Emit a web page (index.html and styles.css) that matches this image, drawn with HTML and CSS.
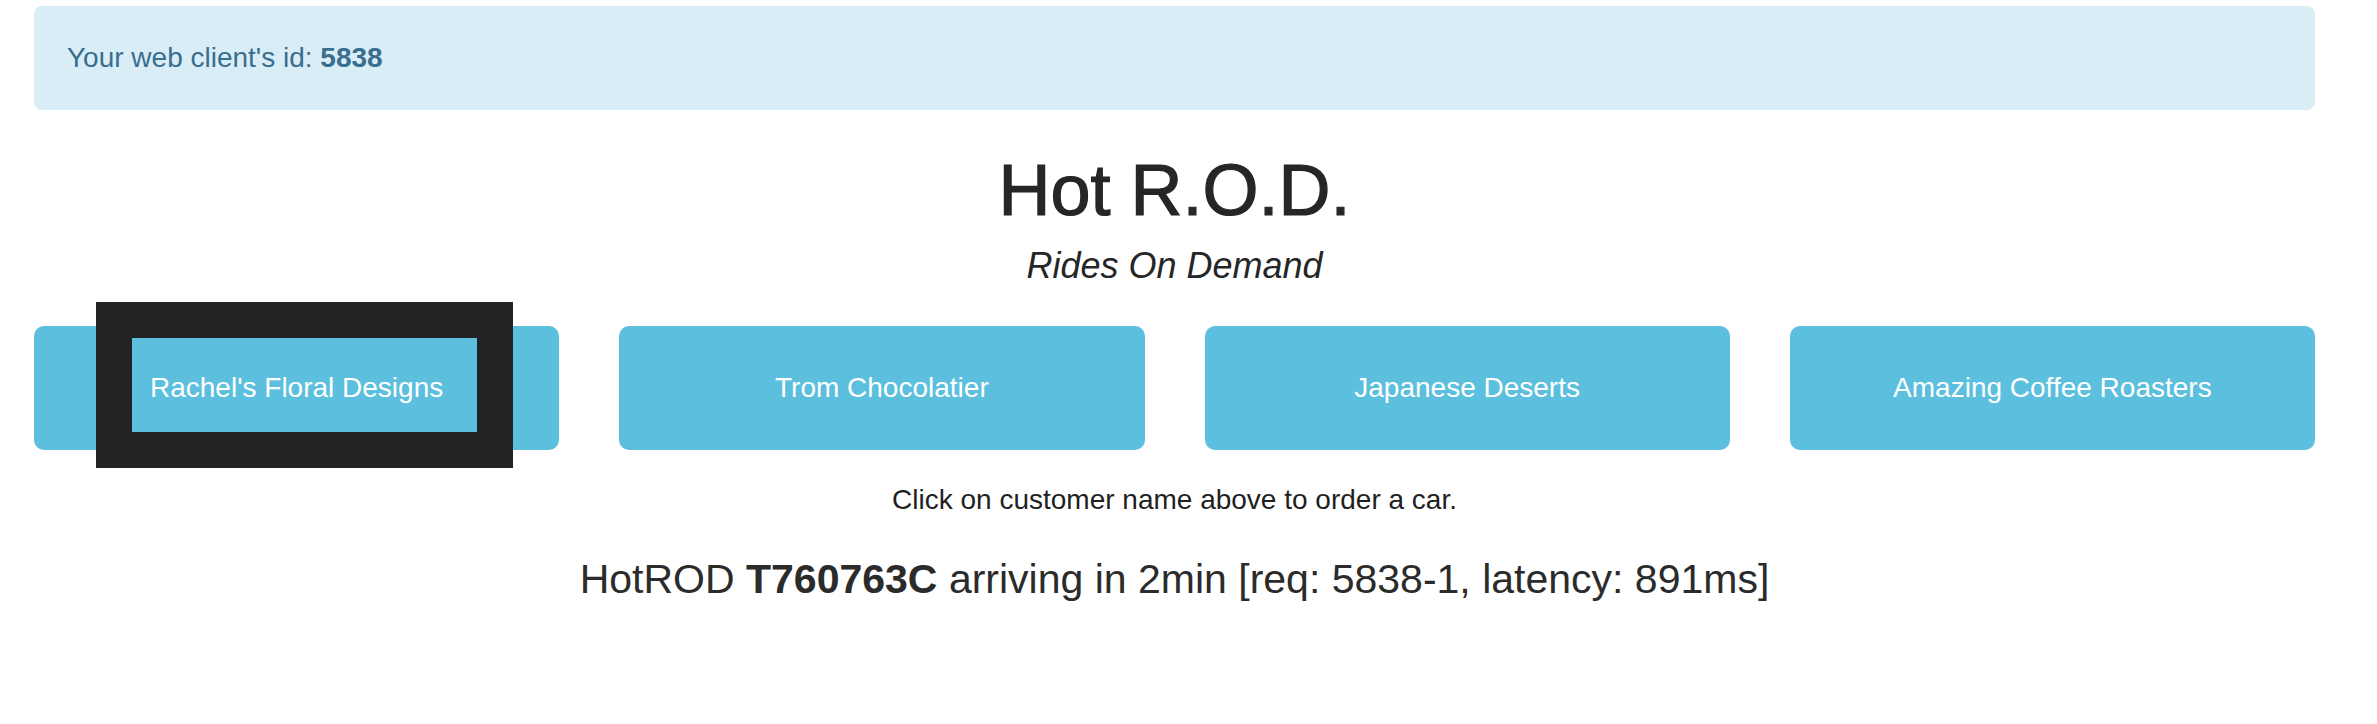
FILE: index.html
```html
<!DOCTYPE html>
<html lang="en">
<head>
<meta charset="utf-8">
<title>Hot R.O.D. - Rides On Demand</title>
<link rel="stylesheet" href="styles.css">
</head>
<body>
<div class="page">
  <div class="alert">Your web client's id: <strong>5838</strong></div>
  <h1 class="title">Hot R.O.D.</h1>
  <p class="subtitle">Rides On Demand</p>
  <div class="customers">
    <div class="cell">
      <button class="btn" type="button">Rachel's Floral Designs</button>
      <span class="focus-box"></span>
    </div>
    <div class="cell"><button class="btn" type="button">Trom Chocolatier</button></div>
    <div class="cell"><button class="btn" type="button">Japanese Deserts</button></div>
    <div class="cell"><button class="btn" type="button">Amazing Coffee Roasters</button></div>
  </div>
  <p class="hint">Click on customer name above to order a car.</p>
  <p class="result">HotROD <strong>T760763C</strong> arriving in 2min [req: 5838-1, latency: 891ms]</p>
</div>
</body>
</html>
```
FILE: styles.css
```css
html, body {
  margin: 0;
  padding: 0;
  background: #ffffff;
}

body {
  font-family: "Liberation Sans", Arial, Helvetica, sans-serif;
  color: #262626;
}

.page {
  width: 2281px;
  margin-left: 34px;
  padding-top: 6px;
  display: flex;
  flex-direction: column;
}

.alert {
  box-sizing: border-box;
  height: 104px;
  padding: 30px 31px;
  border: 2px solid #d9edf7;
  border-radius: 8px;
  background: #d9edf7;
  color: #3a6e8e;
  font-size: 28px;
  line-height: 40px;
}

.alert strong {
  font-weight: 700;
}

.title {
  margin: 40px 0 0;
  font-size: 72px;
  line-height: 80px;
  font-weight: 400;
  text-align: center;
  color: #262626;
  -webkit-text-stroke: 1.2px #262626;
}

.subtitle {
  margin: 16px 0 0;
  font-size: 36px;
  line-height: 40px;
  font-style: italic;
  text-align: center;
  color: #262626;
}

.customers {
  margin-top: 40px;
  display: grid;
  grid-template-columns: repeat(4, 1fr);
  column-gap: 60px;
}

.cell {
  position: relative;
}

.btn {
  display: block;
  width: 100%;
  height: 124px;
  margin: 0;
  padding: 0 20px;
  border: 0;
  border-radius: 10px;
  background: #5bbfdd;
  color: #ffffff;
  font-family: "Liberation Sans", Arial, Helvetica, sans-serif;
  font-size: 28px;
  line-height: 40px;
  text-align: center;
  cursor: pointer;
}

.focus-box {
  position: absolute;
  left: 62px;
  top: -24px;
  width: 417px;
  height: 166px;
  box-sizing: border-box;
  border: 36px solid #232325;
  pointer-events: none;
}

.hint {
  margin: 30px 0 0;
  font-size: 28px;
  line-height: 40px;
  text-align: center;
  color: #1f1f1f;
}

.result {
  margin: 31px 0 0;
  font-size: 41px;
  line-height: 56px;
  font-weight: 300;
  text-align: center;
  color: #2b2b2b;
}

.result strong {
  font-weight: 700;
}
```
